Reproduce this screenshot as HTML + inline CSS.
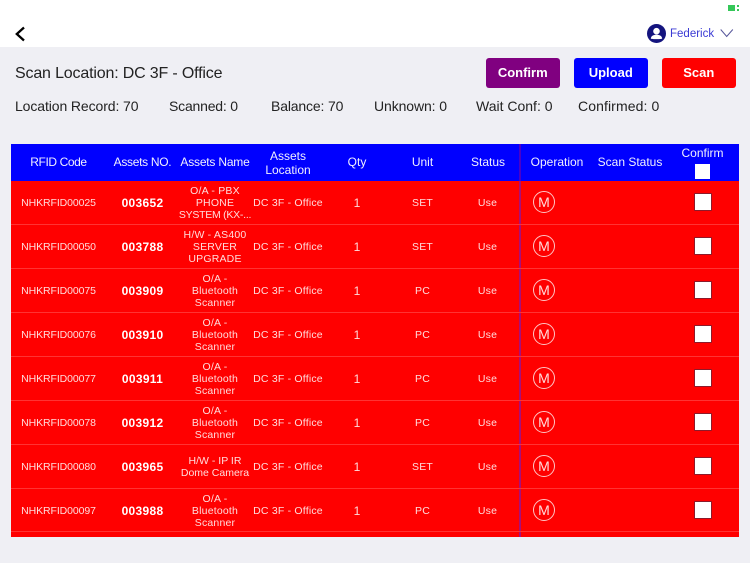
<!DOCTYPE html>
<html><head><meta charset="utf-8">
<style>
*{box-sizing:border-box}
html,body{margin:0;padding:0;width:750px;height:563px;overflow:hidden;background:#efeff4;font-family:"Liberation Sans",sans-serif}
#w{position:absolute;left:0;top:0;width:750px;height:563px;filter:blur(.3px)}
.a{position:absolute}
.t{position:absolute;white-space:nowrap}
.top{left:0;top:0;width:750px;height:47px;background:#fff}
.s{font-size:14px;color:#222;top:98px;line-height:16px}
.btn{position:absolute;top:58px;height:29.5px;width:73.5px;border-radius:3px;color:#fff;font-size:13px;font-weight:bold;text-align:center;line-height:30px}
.c{position:absolute;text-align:center;transform:translateX(-50%);white-space:nowrap}
.h{color:#f0f0ff;font-size:12px;line-height:14px}
.d{color:#ffdcdc;font-size:10.5px;line-height:12px;letter-spacing:.2px}
.r{letter-spacing:-.1px}
.b{color:#fff;font-size:12px;font-weight:bold;line-height:14px;letter-spacing:.3px}
.line{position:absolute;left:11px;width:727.5px;height:1px;background:#ff3333}
.m{position:absolute;left:533px;width:22px;height:22px;border:1px solid #ffc4c4;border-radius:50%;color:#ffdcdc;font-size:14px;line-height:20px;text-align:center}
.cb{position:absolute;left:693.5px;width:18px;height:18px;background:#fff;border:1px solid #8c1a2a;border-radius:1px}
</style></head><body><div id="w">
<div class="a top"></div>
<div class="a" style="left:728px;top:5px;width:7px;height:6px;background:#35c759"></div>
<div class="a" style="left:737px;top:5px;width:2px;height:2px;background:#35c759"></div>
<div class="a" style="left:737px;top:9px;width:2px;height:2px;background:#35c759"></div>
<svg class="a" style="left:14px;top:26px" width="12" height="16" viewBox="0 0 12 16"><path d="M10 1.500 L2.800 8 L10 14.500" fill="none" stroke="#000" stroke-width="2.300"/></svg>
<svg class="a" style="left:647px;top:24px" width="19" height="19" viewBox="0 0 19 19"><circle cx="9.500" cy="9.500" r="9.500" fill="#14147e"/><circle cx="9.500" cy="7.200" r="3.300" fill="#fff"/><path d="M3.800 14.600c.4-2.800 2.600-3.800 5.700-3.800s5.300 1 5.700 3.800c-1.500.7-10 .7-11.400 0z" fill="#fff"/></svg>
<div class="t" style="left:670px;top:26.500px;font-size:11.500px;line-height:14px;color:#3a3ad4">Federick</div>
<svg class="a" style="left:720px;top:28px" width="14" height="10" viewBox="0 0 14 10"><path d="M.7 1.500 L6.700 8.500 L12.800 1.500" fill="none" stroke="#55559a" stroke-width="1"/></svg>

<div class="t" style="left:15px;top:64.500px;font-size:16px;line-height:18px;color:#222;letter-spacing:-.17px">Scan Location: DC 3F - Office</div>
<div class="btn" style="left:486px;background:#800080">Confirm</div>
<div class="btn" style="left:574px;background:#0000ff">Upload</div>
<div class="btn" style="left:662px;background:#ff0000">Scan</div>
<div class="t s" style="left:15px;letter-spacing:-.1px">Location Record: 70</div>
<div class="t s" style="left:169px;letter-spacing:-.2px">Scanned: 0</div>
<div class="t s" style="left:271px;letter-spacing:-.15px">Balance: 70</div>
<div class="t s" style="left:374px;letter-spacing:-.1px">Unknown: 0</div>
<div class="t s" style="left:476px">Wait Conf: 0</div>
<div class="t s" style="left:578px;letter-spacing:.1px">Confirmed: 0</div>

<div class="a" style="left:11px;top:144px;width:727.500px;height:36.500px;background:#0000ff"></div>
<div class="a" style="left:11px;top:180.500px;width:727.500px;height:356.500px;background:#ff0000"></div>
<div class="a" style="left:519px;top:144px;width:2px;height:36.500px;background:#4a00c8"></div>
<div class="a" style="left:519px;top:180.500px;width:2px;height:356.500px;background:#a8107a"></div>

<div class="c h" style="left:58.500px;top:155px;letter-spacing:-.4px">RFID Code</div>
<div class="c h" style="left:142.500px;top:155px;letter-spacing:-.3px">Assets NO.</div>
<div class="c h" style="left:215px;top:155px;letter-spacing:-.2px">Assets Name</div>
<div class="c h" style="left:288px;top:149px">Assets<br>Location</div>
<div class="c h" style="left:357px;top:155px">Qty</div>
<div class="c h" style="left:422.500px;top:155px">Unit</div>
<div class="c h" style="left:488px;top:155px">Status</div>
<div class="c h" style="left:557px;top:155px">Operation</div>
<div class="c h" style="left:630px;top:155px">Scan Status</div>
<div class="c h" style="left:702.500px;top:146px">Confirm</div>
<div class="a" style="left:695px;top:164px;width:15px;height:15px;background:#fff"></div>

<div class="line" style="top:224px"></div>
<div class="line" style="top:268px"></div>
<div class="line" style="top:312px"></div>
<div class="line" style="top:356px"></div>
<div class="line" style="top:400px"></div>
<div class="line" style="top:444px"></div>
<div class="line" style="top:488px"></div>
<div class="line" style="top:531px"></div>

<div class="c d r" style="left:58.500px;top:196.500px">NHKRFID00025</div><div class="c b" style="left:142.500px;top:195.500px">003652</div><div class="c d" style="left:215px;top:184.500px">O/A - PBX<br>PHONE<br><span style="letter-spacing:-.25px">SYSTEM (KX-...</span></div><div class="c d" style="left:288px;top:196.500px">DC 3F - Office</div><div class="c d" style="left:357px;top:196.500px;font-size:12px">1</div><div class="c d" style="left:422.500px;top:196.500px">SET</div><div class="c d" style="left:487.500px;top:196.500px">Use</div><div class="m" style="top:191px">M</div><div class="cb" style="top:193px"></div>

<div class="c d r" style="left:58.500px;top:240.500px">NHKRFID00050</div><div class="c b" style="left:142.500px;top:239.500px">003788</div><div class="c d" style="left:215px;top:228.500px">H/W - AS400<br>SERVER<br>UPGRADE</div><div class="c d" style="left:288px;top:240.500px">DC 3F - Office</div><div class="c d" style="left:357px;top:240.500px;font-size:12px">1</div><div class="c d" style="left:422.500px;top:240.500px">SET</div><div class="c d" style="left:487.500px;top:240.500px">Use</div><div class="m" style="top:235px">M</div><div class="cb" style="top:237px"></div>

<div class="c d r" style="left:58.500px;top:284.500px">NHKRFID00075</div><div class="c b" style="left:142.500px;top:283.500px">003909</div><div class="c d" style="left:215px;top:272.500px">O/A -<br>Bluetooth<br>Scanner</div><div class="c d" style="left:288px;top:284.500px">DC 3F - Office</div><div class="c d" style="left:357px;top:284.500px;font-size:12px">1</div><div class="c d" style="left:422.500px;top:284.500px">PC</div><div class="c d" style="left:487.500px;top:284.500px">Use</div><div class="m" style="top:279px">M</div><div class="cb" style="top:281px"></div>

<div class="c d r" style="left:58.500px;top:328.500px">NHKRFID00076</div><div class="c b" style="left:142.500px;top:327.500px">003910</div><div class="c d" style="left:215px;top:316.500px">O/A -<br>Bluetooth<br>Scanner</div><div class="c d" style="left:288px;top:328.500px">DC 3F - Office</div><div class="c d" style="left:357px;top:328.500px;font-size:12px">1</div><div class="c d" style="left:422.500px;top:328.500px">PC</div><div class="c d" style="left:487.500px;top:328.500px">Use</div><div class="m" style="top:323px">M</div><div class="cb" style="top:325px"></div>

<div class="c d r" style="left:58.500px;top:372.500px">NHKRFID00077</div><div class="c b" style="left:142.500px;top:371.500px">003911</div><div class="c d" style="left:215px;top:360.500px">O/A -<br>Bluetooth<br>Scanner</div><div class="c d" style="left:288px;top:372.500px">DC 3F - Office</div><div class="c d" style="left:357px;top:372.500px;font-size:12px">1</div><div class="c d" style="left:422.500px;top:372.500px">PC</div><div class="c d" style="left:487.500px;top:372.500px">Use</div><div class="m" style="top:367px">M</div><div class="cb" style="top:369px"></div>

<div class="c d r" style="left:58.500px;top:416.500px">NHKRFID00078</div><div class="c b" style="left:142.500px;top:415.500px">003912</div><div class="c d" style="left:215px;top:404.500px">O/A -<br>Bluetooth<br>Scanner</div><div class="c d" style="left:288px;top:416.500px">DC 3F - Office</div><div class="c d" style="left:357px;top:416.500px;font-size:12px">1</div><div class="c d" style="left:422.500px;top:416.500px">PC</div><div class="c d" style="left:487.500px;top:416.500px">Use</div><div class="m" style="top:411px">M</div><div class="cb" style="top:413px"></div>

<div class="c d r" style="left:58.500px;top:460.500px">NHKRFID00080</div><div class="c b" style="left:142.500px;top:459.500px">003965</div><div class="c d" style="left:215px;top:454.500px;letter-spacing:0">H/W - IP IR<br>Dome Camera</div><div class="c d" style="left:288px;top:460.500px">DC 3F - Office</div><div class="c d" style="left:357px;top:460.500px;font-size:12px">1</div><div class="c d" style="left:422.500px;top:460.500px">SET</div><div class="c d" style="left:487.500px;top:460.500px">Use</div><div class="m" style="top:455px">M</div><div class="cb" style="top:457px"></div>

<div class="c d r" style="left:58.500px;top:504.500px">NHKRFID00097</div><div class="c b" style="left:142.500px;top:503.500px">003988</div><div class="c d" style="left:215px;top:492.500px">O/A -<br>Bluetooth<br>Scanner</div><div class="c d" style="left:288px;top:504.500px">DC 3F - Office</div><div class="c d" style="left:357px;top:504.500px;font-size:12px">1</div><div class="c d" style="left:422.500px;top:504.500px">PC</div><div class="c d" style="left:487.500px;top:504.500px">Use</div><div class="m" style="top:499px">M</div><div class="cb" style="top:501px"></div>
</div></body></html>
